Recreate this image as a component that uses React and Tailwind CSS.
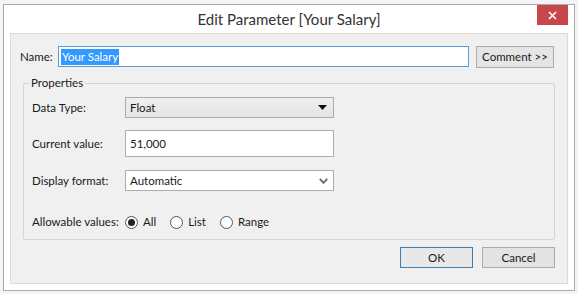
import { useState } from "react"

function Radio({ checked, label }) {
  return (
    <label className="flex items-center gap-[5px]">
      <span className="w-[13px] h-[13px] rounded-full border border-[#555] bg-white flex items-center justify-center">
        {checked && <span className="w-[7px] h-[7px] rounded-full bg-[#222]" />}
      </span>
      <span>{label}</span>
    </label>
  )
}

export default function App() {
  const [name] = useState("Your Salary")

  return (
    <div
      className="w-[578px] h-[294px] bg-[#f4f4f4] pt-[4px] pl-[3px] pr-[3px] pb-[3px] text-[11.5px] text-[#1a1a1a]"
      style={{ fontFamily: "Lato, 'Open Sans', sans-serif" }}
    >
      <div className="h-full border border-[#aaaaaa] bg-white flex flex-col px-[6px] pb-[6px]">
        <div className="h-[28px] relative flex items-center justify-center">
          <span className="text-[15px] text-[#333] mt-[1px]">Edit Parameter [{name}]</span>
          <div className="absolute right-[0px] top-0 w-[31px] h-[20px] bg-[#c7474a] flex items-center justify-center">
            <svg width="9" height="9" viewBox="0 0 9 9">
              <path d="M1 1L8 8M8 1L1 8" stroke="white" strokeWidth="1.6" />
            </svg>
          </div>
        </div>

        <div className="flex-1 bg-[#f0f0f0] border border-[#dcdcdc] flex flex-col pl-[9px] pr-[12px]">
          <div className="flex items-center mt-[12px] h-[21px]">
            <span className="w-[38px]">Name:</span>
            <div className="w-[411px] h-[21px] border border-[#5b9bd5] bg-white flex items-center pl-[2px]">
              <span className="bg-[#3399ff] text-white px-[1px] leading-[16px]">{name}</span>
            </div>
            <button className="ml-[7px] w-[78px] h-[22px] border border-[#acacac] bg-[#e5e5e5]">
              Comment &gt;&gt;
            </button>
          </div>

          <div className="relative mt-[16px] ml-[3px] h-[157px] border border-[#d5d5d5] rounded-[2px] flex flex-col pl-[8px]">
            <span className="absolute -top-[8px] left-[5px] bg-[#f0f0f0] px-[2px] leading-[14px]">Properties</span>

            <div className="flex items-center mt-[13px] h-[21px]">
              <span className="w-[93px]">Data Type:</span>
              <div className="w-[209px] h-[21px] border border-[#acacac] bg-gradient-to-b from-[#f0f0f0] to-[#e4e4e4] flex items-center justify-between px-[4px]">
                <span>Float</span>
                <svg width="9" height="5" viewBox="0 0 9 5" className="mr-[2px]">
                  <path d="M0 0H9L4.5 5Z" fill="#111" />
                </svg>
              </div>
            </div>

            <div className="flex items-center mt-[12px] h-[27px]">
              <span className="w-[93px]">Current value:</span>
              <div className="w-[209px] h-[27px] border border-[#abadb3] bg-white flex items-center px-[4px]">
                51,000
              </div>
            </div>

            <div className="flex items-center mt-[13px] h-[21px]">
              <span className="w-[93px]">Display format:</span>
              <div className="w-[209px] h-[21px] border border-[#abadb3] bg-white flex items-center justify-between px-[4px]">
                <span>Automatic</span>
                <svg width="9" height="6" viewBox="0 0 9 6" className="mr-[1px]">
                  <path d="M0.8 0.8L4.5 4.8L8.2 0.8" stroke="#666" strokeWidth="1.8" fill="none" />
                </svg>
              </div>
            </div>

            <div className="flex items-center mt-[23px] h-[16px]">
              <span className="w-[93px]">Allowable values:</span>
              <div className="flex items-center gap-[14px]">
                <Radio checked label="All" />
                <Radio label="List" />
                <Radio label="Range" />
              </div>
            </div>
          </div>

          <div className="flex justify-end gap-[9px] mt-[7px]">
            <button className="w-[73px] h-[21px] border border-[#3c7fb1] bg-[#e8e8e8]">OK</button>
            <button className="w-[73px] h-[21px] border border-[#acacac] bg-[#e3e3e3]">Cancel</button>
          </div>
        </div>
      </div>
    </div>
  )
}
